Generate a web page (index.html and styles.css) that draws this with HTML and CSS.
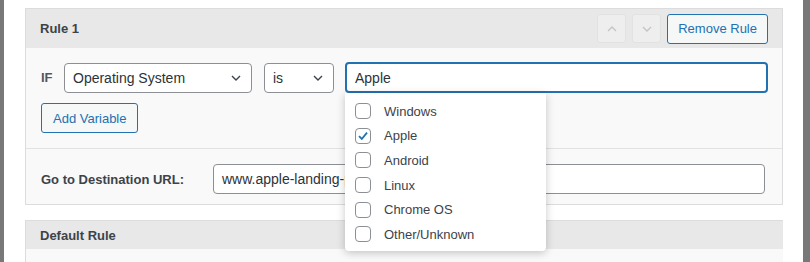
FILE: index.html
```html
<!DOCTYPE html>
<html lang="en">
<head>
    <meta charset="UTF-8">
    <title>Rules</title>
    <link rel="stylesheet" href="styles.css">
</head>
<body>
    <div class="frame">
        <div class="edge"></div>
        <div class="content">
            <!-- Rule 1 -->
            <div class="rule">
                <div class="rule-head">
                    <h3>Rule 1</h3>
                    <div class="rule-actions">
                        <button class="move-btn">
                            <svg width="14" height="14" viewBox="0 0 14 14"><path d="M3 9 L7 5 L11 9" fill="none" stroke="#c3c4c7" stroke-width="1.3"/></svg>
                        </button>
                        <button class="move-btn">
                            <svg width="14" height="14" viewBox="0 0 14 14"><path d="M3 5 L7 9 L11 5" fill="none" stroke="#c3c4c7" stroke-width="1.3"/></svg>
                        </button>
                        <button class="btn">Remove Rule</button>
                    </div>
                </div>
                <div class="rule-body">
                    <div class="cond-row">
                        <span class="if">IF</span>
                        <div class="select sel-var">Operating System
                            <svg width="14" height="14" viewBox="0 0 14 14"><path d="M3 5 L7 9 L11 5" fill="none" stroke="#3c434a" stroke-width="1.4"/></svg>
                        </div>
                        <div class="select sel-op">is
                            <svg width="14" height="14" viewBox="0 0 14 14"><path d="M3 5 L7 9 L11 5" fill="none" stroke="#3c434a" stroke-width="1.4"/></svg>
                        </div>
                        <div class="value-wrap">
                            <div class="input focused">Apple</div>
                            <ul class="dropdown">
                                <li><span class="check"></span>Windows</li>
                                <li><span class="check on">
                                    <svg width="14" height="14" viewBox="0 0 14 14"><path d="M3 7.2 L5.8 10 L11 3.6" fill="none" stroke="#2271b1" stroke-width="1.8"/></svg>
                                </span>Apple</li>
                                <li><span class="check"></span>Android</li>
                                <li><span class="check"></span>Linux</li>
                                <li><span class="check"></span>Chrome OS</li>
                                <li><span class="check"></span>Other/Unknown</li>
                            </ul>
                        </div>
                    </div>
                    <button class="btn add-btn">Add Variable</button>
                </div>
                <div class="rule-dest">
                    <label>Go to Destination URL:</label>
                    <div class="input url">www.apple-landing-page.com</div>
                </div>
            </div>

            <!-- Default rule -->
            <div class="rule default">
                <div class="rule-head small">
                    <h3>Default Rule</h3>
                </div>
                <div class="rule-body stub"></div>
            </div>
        </div>
        <div class="edge right"></div>
    </div>
</body>
</html>
```

FILE: styles.css
```css
body {
    margin: 0;
    font-family: "Liberation Sans", Arial, sans-serif;
    font-size: 13px;
    color: #2c3338;
    background: #fff;
    overflow: hidden;
}

.frame {
    display: flex;
    height: 262px;
}

.edge {
    width: 4px;
    background: #787878;
}

.edge.right {
    width: 7px;
    margin-left: 20px;
}

.content {
    flex: 1;
    padding: 8px 0 0 21px;
}

.rule {
    border: 1px solid #dcdcde;
    background: #f9f9f9;
}

.rule.default {
    margin-top: 15px;
    border-bottom: none;
    border-right: none;
}

.rule-head {
    display: flex;
    align-items: center;
    justify-content: space-between;
    height: 39px;
    padding: 0 14px 0 14px;
    background: #e8e8e8;
}

.rule-head.small {
    height: 28px;
}

.rule-head h3 {
    margin: 0;
    font-size: 13px;
    font-weight: bold;
    color: #3c434a;
}

.rule-actions {
    display: flex;
    align-items: center;
    gap: 6px;
}

.move-btn {
    display: flex;
    align-items: center;
    justify-content: center;
    width: 29px;
    height: 29px;
    padding: 0;
    border: 1px solid #e2e2e2;
    border-radius: 3px;
    background: #eeeeee;
}

.btn {
    height: 30px;
    padding: 0 10px;
    border: 1px solid #2271b1;
    border-radius: 3px;
    background: #f6f7f7;
    color: #2271b1;
    font-family: inherit;
    font-size: 13px;
}

.rule-body {
    padding: 14px 14px 15px 15px;
    border-bottom: 1px solid #e2e2e2;
}

.rule-body.stub {
    height: 20px;
    padding: 0;
    border: none;
}

.cond-row {
    display: flex;
    align-items: center;
    margin-bottom: 10px;
}

.if {
    width: 23px;
    font-weight: bold;
    color: #50575e;
}

.select {
    display: flex;
    align-items: center;
    justify-content: space-between;
    height: 28px;
    padding: 0 8px 0 8px;
    border: 1px solid #8c8f94;
    border-radius: 4px;
    background: #fff;
    font-size: 14px;
}

.sel-var {
    width: 170px;
}

.sel-op {
    width: 52px;
    margin-left: 12px;
}

.value-wrap {
    position: relative;
    flex: 1;
    margin-left: 11px;
}

.input {
    display: flex;
    align-items: center;
    height: 28px;
    padding: 0 8px;
    border: 1px solid #8c8f94;
    border-radius: 4px;
    background: #fff;
    font-size: 14px;
}

.input.focused {
    height: 27px;
    border: 2px solid #2271b1;
}

.dropdown {
    position: absolute;
    top: 31px;
    left: 0;
    width: 201px;
    margin: 0;
    padding: 6px 0 4px;
    list-style: none;
    background: #fff;
    border-radius: 0 0 4px 4px;
    box-shadow: 0 2px 8px rgba(0, 0, 0, 0.22);
    z-index: 3;
}

.dropdown li {
    display: flex;
    align-items: center;
    height: 24.6px;
    padding-left: 10px;
    font-size: 13px;
    color: #3c434a;
}

.check {
    display: flex;
    align-items: center;
    justify-content: center;
    width: 14px;
    height: 14px;
    margin-right: 13px;
    border: 1px solid #8c8f94;
    border-radius: 4px;
}

.add-btn {
    height: 30px;
    padding: 0 11px;
}

.rule-dest {
    display: flex;
    align-items: center;
    padding: 15px 17px 10px 15px;
}

.rule-dest label {
    width: 172px;
    font-weight: bold;
    color: #3c434a;
}

.input.url {
    flex: 1;
}
```
